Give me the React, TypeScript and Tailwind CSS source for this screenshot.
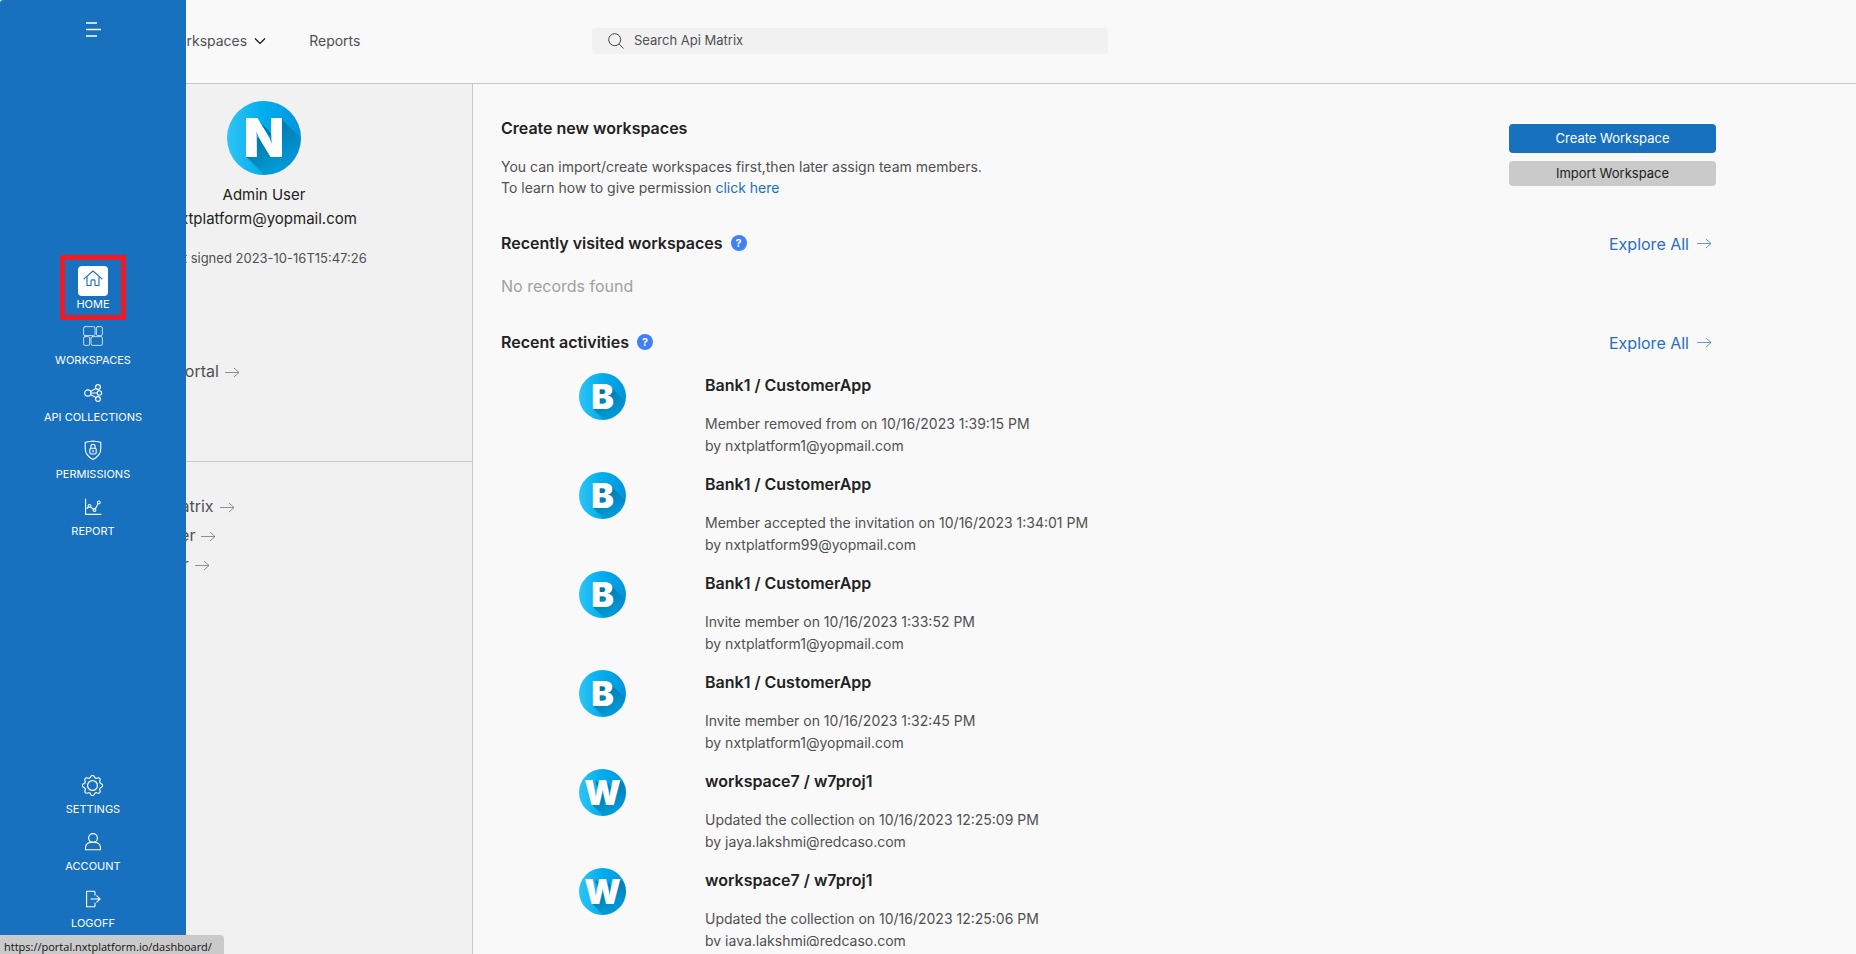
import type { ReactNode } from "react";

type Letter = "N" | "B" | "W";

const shadows: Record<Letter, string[]> = {
  N: ["20,57 60,97 95,58 55,18 50,40 31,37", "30,18 46,34 46,40"],
  B: ["22,57 62,97 96,66 50,22 26,26"],
  W: ["21,57 61,97 100,54 65,18 52,50 38,38", "26,18 38,30 34,46", "46,22 52,30 50,44"],
};

function Avatar({ letter, id, className }: { letter: Letter; id: string; className: string }) {
  return (
    <svg viewBox="0 0 75 75" className={className} role="img" aria-label={letter}>
      <defs>
        <linearGradient id={`${id}-disc`} x1="0" x2="1" y1="0" y2="0">
          <stop offset="0" stopColor="#2fc4f4" />
          <stop offset="0.5" stopColor="#00adee" />
          <stop offset="1" stopColor="#0094dc" />
        </linearGradient>
        <linearGradient id={`${id}-shade`} x1="30" y1="30" x2="66" y2="66" gradientUnits="userSpaceOnUse">
          <stop offset="0" stopColor="#00719c" />
          <stop offset="1" stopColor="#00719c" stopOpacity="0.05" />
        </linearGradient>
        <clipPath id={`${id}-clip`}>
          <circle cx="37.5" cy="37.5" r="37.5" />
        </clipPath>
      </defs>
      <circle cx="37.5" cy="37.5" r="37.5" fill={`url(#${id}-disc)`} />
      <g clipPath={`url(#${id}-clip)`}>
        {shadows[letter].map((points) => (
          <polygon key={points} points={points} fill={`url(#${id}-shade)`} />
        ))}
      </g>
      <text x="37.5" y="57" textAnchor="middle" fill="#fff" fontSize="54" fontWeight="900" fontFamily="Inter, sans-serif">
        {letter}
      </text>
    </svg>
  );
}

function Arrow({ className }: { className: string }) {
  return (
    <svg viewBox="0 0 15 12" className={`h-3 w-[15px] ${className}`} fill="none" stroke="currentColor" strokeWidth="0.7" aria-hidden="true">
      <path d="M0 5.500h14M9 1l5 4.500L9 10" />
    </svg>
  );
}

function Icon({ children, className = "size-5" }: { children: ReactNode; className?: string }) {
  return (
    <svg viewBox="0 0 20 20" className={className} fill="none" stroke="currentColor" strokeWidth="1.1" strokeLinejoin="round" strokeLinecap="round" aria-hidden="true">
      {children}
    </svg>
  );
}

const gearPath =
  Array.from({ length: 96 }, (_, i) => {
    const angle = (i / 96) * Math.PI * 2;
    const wave = Math.max(-0.75, Math.min(0.75, Math.cos(angle * 8)));
    const radius = 8.6 + wave * 1.3;
    const x = (10 + Math.cos(angle) * radius).toFixed(2);
    const y = (10 + Math.sin(angle) * radius).toFixed(2);
    return `${i === 0 ? "M" : "L"}${x} ${y}`;
  }).join("") + "Z";

const icons = {
  home: (
    <Icon>
      <path d="M1 9.8L10 2l9 7.8M4 8v8.5h4v-4.6a1 1 0 0 1 1-1h2a1 1 0 0 1 1 1v4.6h4V8" />
    </Icon>
  ),
  workspaces: (
    <Icon>
      <g strokeWidth="0.9" opacity="0.85">
        <rect x="0.6" y="0.6" width="11.4" height="9" rx="1.5" />
        <rect x="13.4" y="0.6" width="6" height="9" rx="1.5" />
        <rect x="0.6" y="10.6" width="6" height="8.8" rx="1.5" />
        <rect x="8" y="10.6" width="11.4" height="8.8" rx="1.5" />
      </g>
    </Icon>
  ),
  collections: (
    <Icon>
      <circle cx="4.8" cy="10" r="3.1" />
      <circle cx="15" cy="4" r="2.4" />
      <circle cx="16.4" cy="10" r="2.2" />
      <circle cx="15" cy="16" r="2.4" />
      <path d="M7.5 8.4l5.4-3M8 10h6.2M7.5 11.6l5.4 3M15 6.4v.8M15 12.8v.8" />
    </Icon>
  ),
  permissions: (
    <Icon>
      <path d="M10 1L2.2 2.2v6c0 5.2 3 8.8 7.8 11.2 4.8-2.4 7.8-6 7.8-11.2v-6z" />
      <rect x="6.8" y="8.2" width="6.4" height="5.8" rx="1.4" />
      <path d="M7.9 8.2V6.4a2.1 2.1 0 0 1 4.2 0v1.8M10 10.3v1.6" />
    </Icon>
  ),
  report: (
    <Icon>
      <path d="M2.6 2v15.4H18M4 11.4l1.6-1.8M7.6 9.8l2.8 2.5M12.4 11.8l2.8-5.2" />
      <circle cx="6.5" cy="8.9" r="1.4" />
      <circle cx="11.5" cy="13" r="1.4" />
      <circle cx="15.8" cy="5.4" r="1.4" />
    </Icon>
  ),
  settings: (
    <Icon className="size-[21px]">
      <path d={gearPath} />
      <circle cx="10" cy="10" r="4.7" />
    </Icon>
  ),
  account: (
    <Icon>
      <circle cx="10" cy="6" r="4.4" />
      <path d="M2.5 17.8v-2c0-3 2.3-5 5-5.4h5c2.7.4 5 2.4 5 5.4v2z" />
    </Icon>
  ),
  logoff: (
    <Icon>
      <path d="M12 6V3.2a1 1 0 0 0-1-1H3.600v15.600H11a1 1 0 0 0 1-1V14M8 10h9M13.800 6.800L17 10l-3.200 3.200" />
    </Icon>
  ),
};

function NavItem({ icon, label, active = false }: { icon: ReactNode; label: string; active?: boolean }) {
  return (
    <a href="#" className="flex flex-col items-center text-white">
      <span className={`flex size-[30px] items-center justify-center ${active ? "rounded-sm bg-white pb-1 text-[#1871be]" : "mb-px"}`}>{icon}</span>
      <span className="text-[11px] leading-4">{label}</span>
    </a>
  );
}

function Sidebar() {
  return (
    <aside className="absolute inset-y-0 left-0 z-10 flex w-[186px] flex-col items-center rounded-tl-[3px] bg-[#1871be] pt-[20px] pb-[23px]">
      <button type="button" aria-label="Menu" className="text-white">
        <svg viewBox="0 0 18 18" className="size-[18px]" stroke="currentColor" strokeWidth="1.4" aria-hidden="true">
          <path d="M2 3h11M2 9.500h15M2 16h11" />
        </svg>
      </button>
      <nav className="mt-[217px] flex flex-col items-center">
        <div className="flex w-[66px] flex-col items-center border-[5px] border-[#ed1c24] pt-1.5 pb-[3px]">
          <NavItem icon={icons.home} label="HOME" active />
        </div>
        <div className="mt-px flex flex-col items-center gap-2.5">
          <NavItem icon={icons.workspaces} label="WORKSPACES" />
          <NavItem icon={icons.collections} label="API COLLECTIONS" />
          <NavItem icon={icons.permissions} label="PERMISSIONS" />
          <NavItem icon={icons.report} label="REPORT" />
        </div>
      </nav>
      <nav className="mt-auto flex flex-col items-center gap-2.5">
        <NavItem icon={icons.settings} label="SETTINGS" />
        <NavItem icon={icons.account} label="ACCOUNT" />
        <NavItem icon={icons.logoff} label="LOGOFF" />
      </nav>
    </aside>
  );
}

function Header() {
  return (
    <header className="flex h-[84px] shrink-0 items-center border-b border-[#c8c8c8] pr-[748px] pb-0.5 text-[14px] text-[#505050]">
      <div className="flex w-[592px] shrink-0 items-center pl-[165px]">
        <button type="button" className="flex items-center gap-[7px]">
          Workspaces
          <svg viewBox="0 0 12 8" className="h-2 w-3" fill="none" stroke="#111" strokeWidth="1.2" aria-hidden="true">
            <path d="M1 1.500l5 5 5-5" />
          </svg>
        </button>
        <a href="#" className="ml-[43px]">Reports</a>
      </div>
      <label className="flex h-[26px] flex-1 items-center gap-2.5 rounded-sm bg-[#f1f1f1] pl-4">
        <svg viewBox="0 0 16 16" className="size-4" fill="none" stroke="#333" strokeWidth="0.9" aria-hidden="true">
          <circle cx="6.7" cy="6.7" r="6" />
          <path d="M11 11l4.500 4.500" />
        </svg>
        <input type="search" aria-label="Search Api Matrix" placeholder="Search Api Matrix" className="min-w-0 flex-1 bg-transparent text-[13px] outline-none placeholder:text-[#505050] placeholder:opacity-100" />
      </label>
    </header>
  );
}

function PanelLink({ label }: { label: string }) {
  return (
    <a href="#" className="flex items-center gap-1.5 text-[16px] leading-[29px] text-[#505050]">
      {label}
      <Arrow className="mt-0.5 text-[#666]" />
    </a>
  );
}

function ProfilePanel() {
  return (
    <section className="flex w-[473px] shrink-0 flex-col border-r border-[#c8c8c8] bg-[#f1f1f1] pl-14">
      <div className="flex h-[378px] flex-col items-center border-b border-[#c8c8c8] pt-[17px] text-[#222]">
        <Avatar letter="N" id="profile" className="size-[74px]" />
        <p className="mt-2 text-[15px] leading-6">Admin User</p>
        <p className="text-[15px] leading-6">nxtplatform@yopmail.com</p>
        <p className="mt-[17px] text-[13px] leading-5 text-[#505050]">Last signed 2023-10-16T15:47:26</p>
        <div className="mt-[89px] w-full pl-[37px]">
          <PanelLink label="Developer Portal" />
        </div>
      </div>
      <div className="flex flex-col pt-[30px] pl-[33px]">
        <PanelLink label="Learn Api Matrix" />
        <PanelLink label="Api Developer" />
        <PanelLink label="Api Publisher" />
      </div>
    </section>
  );
}

function SectionHead({ title }: { title: string }) {
  return (
    <div className="flex h-6 items-center justify-between">
      <div className="flex items-center gap-2 pb-0.5">
        <h2 className="text-[16px] font-semibold">{title}</h2>
        <button type="button" aria-label="Help" className="flex size-4 items-center justify-center rounded-full bg-[#4080f4] text-[11px] font-semibold text-white">
          ?
        </button>
      </div>
      <a href="#" className="flex items-center gap-2 pr-1 text-[16px] text-[#2a6ebb]">
        Explore All
        <Arrow className="text-[#2a6ebb]" />
      </a>
    </div>
  );
}

const activities: { letter: Letter; title: string; event: string; by: string }[] = [
  { letter: "B", title: "Bank1 / CustomerApp", event: "Member removed from on 10/16/2023 1:39:15 PM", by: "nxtplatform1@yopmail.com" },
  { letter: "B", title: "Bank1 / CustomerApp", event: "Member accepted the invitation on 10/16/2023 1:34:01 PM", by: "nxtplatform99@yopmail.com" },
  { letter: "B", title: "Bank1 / CustomerApp", event: "Invite member on 10/16/2023 1:33:52 PM", by: "nxtplatform1@yopmail.com" },
  { letter: "B", title: "Bank1 / CustomerApp", event: "Invite member on 10/16/2023 1:32:45 PM", by: "nxtplatform1@yopmail.com" },
  { letter: "W", title: "workspace7 / w7proj1", event: "Updated the collection on 10/16/2023 12:25:09 PM", by: "jaya.lakshmi@redcaso.com" },
  { letter: "W", title: "workspace7 / w7proj1", event: "Updated the collection on 10/16/2023 12:25:06 PM", by: "jaya.lakshmi@redcaso.com" },
];

function Main() {
  return (
    <main className="flex min-w-0 flex-1 flex-col pt-8 pr-[140px] pb-2 pl-7 text-[#222]">
      <div className="flex shrink-0 justify-between">
        <div>
          <h1 className="text-[16px] leading-6 font-semibold">Create new workspaces</h1>
          <p className="mt-4 text-[14px] leading-[21px] text-[#505050]">
            You can import/create workspaces first,then later assign team members.
            <br />
            To learn how to give permission <a href="#" className="text-[#1871be]">click here</a>
          </p>
        </div>
        <div className="flex w-[207px] flex-col gap-2 pt-2 text-[13px]">
          <button type="button" className="h-[29px] rounded-sm bg-[#1871be] text-white">Create Workspace</button>
          <button type="button" className="h-[25px] rounded-sm bg-[#cacaca] text-[#222]">Import Workspace</button>
        </div>
      </div>
      <section className="mt-[34px] shrink-0">
        <SectionHead title="Recently visited workspaces" />
        <p className="mt-[18px] text-[16px] leading-6 text-[#a0a0a0]">No records found</p>
      </section>
      <section className="mt-[33px] flex min-h-0 flex-1 flex-col">
        <SectionHead title="Recent activities" />
        <ul className="mt-[18px] min-h-0 flex-1 overflow-hidden">
          {activities.map((item, index) => (
            <li key={index} className="flex h-[99px] gap-[79px] pl-[78px]">
              <Avatar letter={item.letter} id={`activity-${index}`} className="size-[47px] shrink-0" />
              <div>
                <h3 className="text-[16px] leading-6 font-semibold">{item.title}</h3>
                <p className="mt-4 text-[14px] leading-[22px] text-[#505050]">
                  {item.event}
                  <br />
                  by {item.by}
                </p>
              </div>
            </li>
          ))}
        </ul>
      </section>
    </main>
  );
}

export default function App() {
  return (
    <div className="relative flex h-screen flex-col overflow-hidden bg-[#f9f9f9] font-[Inter,sans-serif]">
      <Header />
      <div className="flex min-h-0 flex-1">
        <ProfilePanel />
        <Main />
      </div>
      <Sidebar />
      <div className="absolute bottom-0 left-0 z-20 h-[19px] rounded-tr-sm bg-[#cacaca] pr-3 pl-1 font-['Open_Sans',sans-serif] text-[11px] leading-[23px] text-[#111]">
        https://portal.nxtplatform.io/dashboard/
      </div>
    </div>
  );
}
